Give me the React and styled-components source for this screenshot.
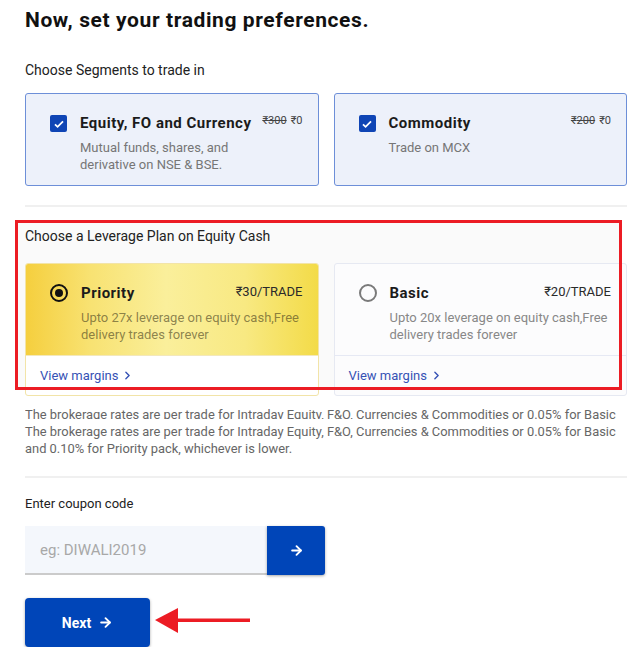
import React from "react";
import styled, { createGlobalStyle } from "styled-components";
import { ArrowRight, ChevronRight } from "lucide-react";

const GlobalStyle = createGlobalStyle`
  * { box-sizing: border-box; }
  body {
    margin: 0;
    background: #fff;
    font-family: Roboto, "Liberation Sans", Arial, sans-serif;
    color: #222;
  }
`;

const Page = styled.main`
  width: 639px;
  padding: 8px 12px 0 25px;
`;

const Title = styled.h1`
  margin: 0;
  font-size: 21px;
  line-height: 24px;
  font-weight: 700;
  letter-spacing: 0.6px;
  color: #111;
`;

const Label = styled.div`
  margin-top: ${(p) => p.$top || 0}px;
  font-size: ${(p) => p.$size || 14}px;
  line-height: 17px;
  color: #222;
`;

const TwoCols = styled.div`
  display: grid;
  grid-template-columns: 1fr 1fr;
  gap: 15px;
  margin-top: ${(p) => p.$top || 0}px;
`;

const SegmentCard = styled.div`
  display: flex;
  gap: 13px;
  height: 93px;
  padding: 19px 15px 0 24px;
  background: #edf1fa;
  border: 1px solid #6d8fd8;
  border-radius: 3px;
`;

const CheckBox = styled.span`
  flex: none;
  width: 17px;
  height: 17px;
  margin-top: 2px;
  border-radius: 2px;
  background: #0f45b5;
  display: flex;
  align-items: center;
  justify-content: center;
`;

const CardBody = styled.div`
  flex: 1;
  min-width: 0;
`;

const CardHead = styled.div`
  display: flex;
  justify-content: space-between;
  align-items: flex-start;
  gap: 5px;
`;

const CardTitle = styled.div`
  font-size: 15px;
  line-height: 20px;
  font-weight: 700;
  letter-spacing: 0.5px;
  color: #1b1b1b;
  white-space: nowrap;
`;

const SmallPrice = styled.div`
  font-size: 11px;
  line-height: 16px;
  color: #444;
  white-space: nowrap;
  s { margin-right: 4px; }
`;

const CardText = styled.div`
  margin-top: 6px;
  font-size: 13px;
  line-height: 17px;
  color: ${(p) => p.$color || "#767676"};
`;

const Divider = styled.hr`
  margin: ${(p) => p.$top}px 0 0;
  border: none;
  height: 2px;
  background: #f0f0f0;
`;

const LeverageSection = styled.section`
  position: relative;
  margin: 13px 0 0 -10px;
  padding: 8px 0 0 10px;
  background: linear-gradient(#fafafa, #fafafa) no-repeat;
  background-size: 607px 170px;
`;

const Highlight = styled.div`
  position: absolute;
  top: 0;
  left: 0;
  width: 607px;
  height: 170px;
  border: 3px solid #ec1c24;
  pointer-events: none;
`;

const PlanCard = styled.div`
  border: 1px solid ${(p) => (p.$active ? "#f2e4a8" : "#e6e9f2")};
  border-radius: 3px;
  background: ${(p) => (p.$active ? "#fff" : "#fcfcfd")};
  overflow: hidden;
`;

const PlanTop = styled.div`
  display: flex;
  gap: 13px;
  height: 91px;
  padding: 19px 15px 0 24px;
  background: ${(p) =>
    p.$active
      ? "linear-gradient(90deg, #f5cf3e 0%, #f8e272 22%, #faef9b 48%, #f8e982 75%, #f3db48 100%)"
      : "transparent"};
`;

const Radio = styled.span`
  flex: none;
  width: 18px;
  height: 18px;
  margin-top: 1px;
  border-radius: 50%;
  border: 2px solid ${(p) => (p.$on ? "#111" : "#7a7a7a")};
  display: flex;
  align-items: center;
  justify-content: center;
  &::after {
    content: "";
    display: ${(p) => (p.$on ? "block" : "none")};
    width: 8px;
    height: 8px;
    border-radius: 50%;
    background: #111;
  }
`;

const PlanPrice = styled.div`
  font-size: 13px;
  line-height: 17px;
  color: #2a2a2a;
  white-space: nowrap;
`;

const PlanFoot = styled.a`
  display: flex;
  align-items: center;
  gap: 3px;
  height: 40px;
  padding-left: 14px;
  border-top: 1px solid ${(p) => (p.$active ? "#f3e8bb" : "#e6e9f4")};
  font-size: 13px;
  color: #3652b5;
  text-decoration: none;
`;

const Note = styled.div`
  margin-top: 10px;
  font-size: 12.9px;
  line-height: 17px;
  color: #666;
`;

const ClippedLine = styled.div`
  height: 17px;
  white-space: nowrap;
  clip-path: inset(0 0 4px 0);
`;

const CouponRow = styled.div`
  display: flex;
  margin-top: 14px;
`;

const CouponInput = styled.input`
  width: 242px;
  height: 49px;
  padding: 0 15px;
  border: none;
  border-bottom: 2px solid #cbcbcb;
  background: #f4f7fc;
  font-family: Roboto, "Liberation Sans", Arial, sans-serif;
  font-size: 15px;
  color: #333;
  outline: none;
  &::placeholder { color: #a8a8a8; }
`;

const BlueButton = styled.button`
  display: flex;
  align-items: center;
  justify-content: center;
  gap: 7px;
  width: ${(p) => p.$w}px;
  height: 49px;
  border: none;
  border-radius: ${(p) => (p.$joined ? "0 3px 3px 0" : "4px")};
  background: #0045b8;
  color: #fff;
  font-family: Roboto, "Liberation Sans", Arial, sans-serif;
  font-size: 14px;
  font-weight: 700;
  box-shadow: 0 1px 3px rgba(0, 0, 0, 0.35);
  cursor: pointer;
`;

const NextWrap = styled.div`
  position: relative;
  margin-top: 23px;
  width: 125px;
`;

const PointerArrow = styled.svg`
  position: absolute;
  left: 130px;
  top: 8px;
`;

function Segment({ title, was, desc }) {
  return (
    <SegmentCard>
      <CheckBox>
        <svg width="12" height="12" viewBox="0 0 12 12">
          <path d="M2 6.3l2.6 2.5L10 3.4" fill="none" stroke="#fff" strokeWidth="1.8" />
        </svg>
      </CheckBox>
      <CardBody>
        <CardHead>
          <CardTitle>{title}</CardTitle>
          <SmallPrice>
            <s>₹{was}</s>₹0
          </SmallPrice>
        </CardHead>
        <CardText>{desc}</CardText>
      </CardBody>
    </SegmentCard>
  );
}

function Plan({ name, price, desc, active }) {
  return (
    <PlanCard $active={active}>
      <PlanTop $active={active}>
        <Radio $on={active} />
        <CardBody>
          <CardHead>
            <CardTitle>{name}</CardTitle>
            <PlanPrice>{price}</PlanPrice>
          </CardHead>
          <CardText $color={active ? "rgba(70, 62, 30, 0.62)" : "#888"}>{desc}</CardText>
        </CardBody>
      </PlanTop>
      <PlanFoot $active={active} href="#">
        View margins <ChevronRight size={13} strokeWidth={2.6} />
      </PlanFoot>
    </PlanCard>
  );
}

const brokerage =
  "The brokerage rates are per trade for Intraday Equity, F&O, Currencies & Commodities or 0.05% for Basic";

export default function App() {
  return (
    <>
      <GlobalStyle />
      <Page>
        <Title>Now, set your trading preferences.</Title>
        <Label $top={30}>Choose Segments to trade in</Label>
        <TwoCols $top={14}>
          <Segment
            title="Equity, FO and Currency"
            was="300"
            desc={<>Mutual funds, shares, and<br />derivative on NSE &amp; BSE.</>}
          />
          <Segment title="Commodity" was="200" desc="Trade on MCX" />
        </TwoCols>
        <Divider $top={19} />

        <LeverageSection>
          <Label>Choose a Leverage Plan on Equity Cash</Label>
          <TwoCols $top={18}>
            <Plan
              active
              name="Priority"
              price="₹30/TRADE"
              desc={<>Upto 27x leverage on equity cash,Free<br />delivery trades forever</>}
            />
            <Plan
              name="Basic"
              price="₹20/TRADE"
              desc={<>Upto 20x leverage on equity cash,Free<br />delivery trades forever</>}
            />
          </TwoCols>
          <Highlight />
        </LeverageSection>

        <Note>
          <ClippedLine>{brokerage}</ClippedLine>
          {brokerage}
          <br />
          and 0.10% for Priority pack, whichever is lower.
        </Note>
        <Divider $top={19} />

        <Label $top={17} $size={13}>Enter coupon code</Label>
        <CouponRow>
          <CouponInput placeholder="eg: DIWALI2019" />
          <BlueButton $w={58} $joined>
            <ArrowRight size={15} strokeWidth={3} />
          </BlueButton>
        </CouponRow>

        <NextWrap>
          <BlueButton $w={125}>
            Next <ArrowRight size={15} strokeWidth={3} />
          </BlueButton>
          <PointerArrow width="96" height="32" viewBox="0 0 96 32">
            <polygon points="0,14 23,2 23,27" fill="#ec1c24" />
            <rect x="20" y="12.5" width="75" height="3.5" fill="#ec1c24" />
          </PointerArrow>
        </NextWrap>
      </Page>
    </>
  );
}
